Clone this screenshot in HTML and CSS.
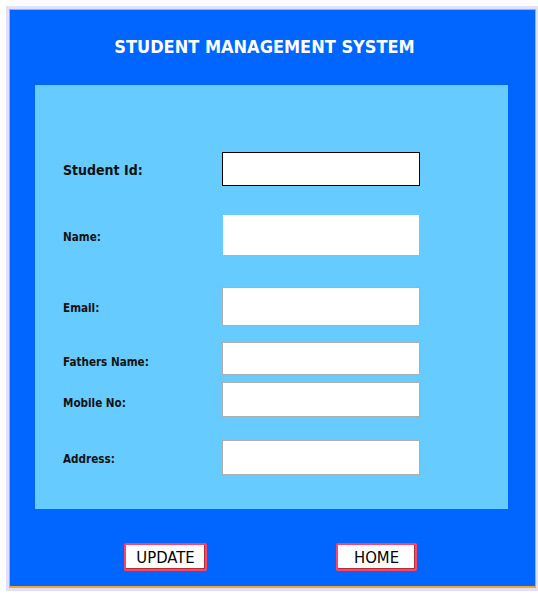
FILE: index.html
```html
<!DOCTYPE html>
<html>
<head>
<meta charset="utf-8">
<link rel="stylesheet" href="styles.css">
</head>
<body>
<div class="frame">
  <div class="window">
    <h1 class="title">STUDENT MANAGEMENT SYSTEM</h1>
    <div class="panel">
      <div class="row row-id">
        <label class="lbl lbl-big">Student Id:</label>
        <input class="field field-id" type="text">
      </div>
      <div class="row row-name">
        <label class="lbl">Name:</label>
        <input class="field field-name" type="text">
      </div>
      <div class="row row-email">
        <label class="lbl">Email:</label>
        <input class="field field-email" type="text">
      </div>
      <div class="row row-father">
        <label class="lbl lbl-low">Fathers Name:</label>
        <input class="field field-father" type="text">
      </div>
      <div class="row row-mobile">
        <label class="lbl lbl-low">Mobile No:</label>
        <input class="field field-mobile" type="text">
      </div>
      <div class="row row-address">
        <label class="lbl">Address:</label>
        <input class="field field-address" type="text">
      </div>
    </div>
    <div class="actions">
      <button class="btn btn-update">UPDATE</button>
      <button class="btn btn-home">HOME</button>
    </div>
  </div>
</div>
</body>
</html>
```
FILE: styles.css
```css
html, body {
  margin: 0;
  padding: 0;
  background: #ffffff;
}
body {
  font-family: "DejaVu Sans", Verdana, sans-serif;
}
.frame {
  margin: 6px 0 0 6px;
  width: 532px;
  height: 585px;
  box-sizing: border-box;
  border-top: 3px solid #e0e0fa;
  border-left: 3px solid #e0e0fa;
  border-right: 2px solid #e0e0fa;
  border-bottom: 3px solid #e0e0fa;
}
.window {
  box-sizing: border-box;
  height: 100%;
  background: #0066ff;
  border: 1px solid #f5a623;
  border-bottom-width: 2px;
  padding-top: 28px;
}
.title {
  margin: 0;
  height: 18px;
  line-height: 18px;
  text-align: center;
  color: #ffffff;
  font-size: 18px;
  font-weight: bold;
  font-stretch: condensed;
  padding-right: 16px;
}
.panel {
  margin: 29px 0 0 25px;
  width: 473px;
  height: 424px;
  box-sizing: border-box;
  background: #66ccff;
  padding: 67px 0 0 28px;
}
.row {
  display: flex;
  align-items: center;
}
.lbl {
  width: 159px;
  flex: none;
  font-size: 11.6px;
  font-weight: bold;
  font-stretch: condensed;
  color: #111111;
  padding-top: 3px;
}
.lbl-low {
  padding-top: 7px;
}
.lbl-big {
  font-size: 14px;
  padding-top: 2px;
}
.field {
  box-sizing: border-box;
  width: 198px;
  margin: 0;
  padding: 0;
  background: #ffffff;
  border: 1px solid #aeaeae;
  outline: none;
}
.field-id {
  height: 34px;
  border: 1px solid #000000;
}
.field-name {
  height: 40px;
  width: 196px;
  margin-left: 1px;
  border: none;
}
.field-email { height: 39px; }
.field-father { height: 33px; }
.field-mobile { height: 35px; }
.field-address { height: 35px; }
.row-name { margin-top: 29px; }
.row-email { margin-top: 32px; }
.row-father { margin-top: 16px; }
.row-mobile { margin-top: 7px; }
.row-address { margin-top: 23px; }
.actions {
  display: flex;
  margin: 34px 0 0 114px;
}
.btn {
  box-sizing: border-box;
  height: 28px;
  padding: 0;
  background: #ffffff;
  border: 2px solid #ff4466;
  border-radius: 2px;
  box-shadow: inset -1px -1px 0 #b03030;
  font-family: "DejaVu Sans", Tahoma, sans-serif;
  font-stretch: condensed;
  font-size: 16.5px;
  color: #000000;
}
.btn-update {
  width: 83px;
}
.btn-home {
  width: 81px;
  margin-left: 129px;
}
```
